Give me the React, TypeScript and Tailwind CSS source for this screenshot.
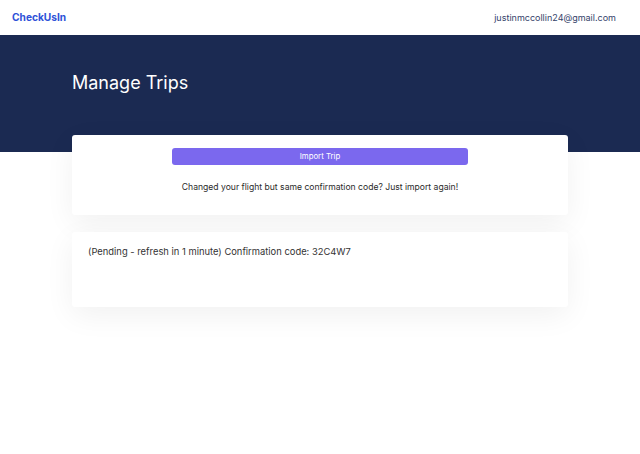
export default function App() {
  return (
    <div className="min-h-[454px] bg-white text-[#1f2937]" style={{ fontFamily: 'Inter, "Noto Sans", sans-serif' }}>
      {/* Top nav */}
      <header className="h-[35px] flex items-center justify-between pl-3 pr-6 bg-white">
        <span className="text-[10.2px] font-bold text-[#2f52d8]">CheckUsIn</span>
        <span className="text-[9px] text-[#34426a]">justinmccollin24@gmail.com</span>
      </header>

      {/* Banner */}
      <div className="bg-[#1b2a52] h-[117px] px-[72px] pt-[35px]">
        <h1 className="text-[18px] text-white leading-[26px]">Manage Trips</h1>
      </div>

      <main className="px-[72px] -mt-[17px] flex flex-col gap-[17px]">
        {/* Import card */}
        <section className="bg-white rounded-[3px] shadow-[0_8px_30px_rgba(0,0,0,0.06)] h-[80px] flex flex-col items-center pt-[13px]">
          <button className="w-[296px] h-[17px] rounded-[3px] bg-[#7b68ee] text-white text-[7.8px] leading-[17px]">
            Import Trip
          </button>
          <p className="mt-[16px] text-[8.6px] text-[#2a2a2a]">
            Changed your flight but same confirmation code? Just import again!
          </p>
        </section>

        {/* Trip card */}
        <section className="bg-white rounded-[3px] shadow-[0_8px_30px_rgba(0,0,0,0.06)] h-[75px] px-4 pt-[13px]">
          <p className="text-[9.4px] text-[#333]">
            (Pending - refresh in 1 minute) Confirmation code: 32C4W7
          </p>
        </section>
      </main>
    </div>
  );
}
